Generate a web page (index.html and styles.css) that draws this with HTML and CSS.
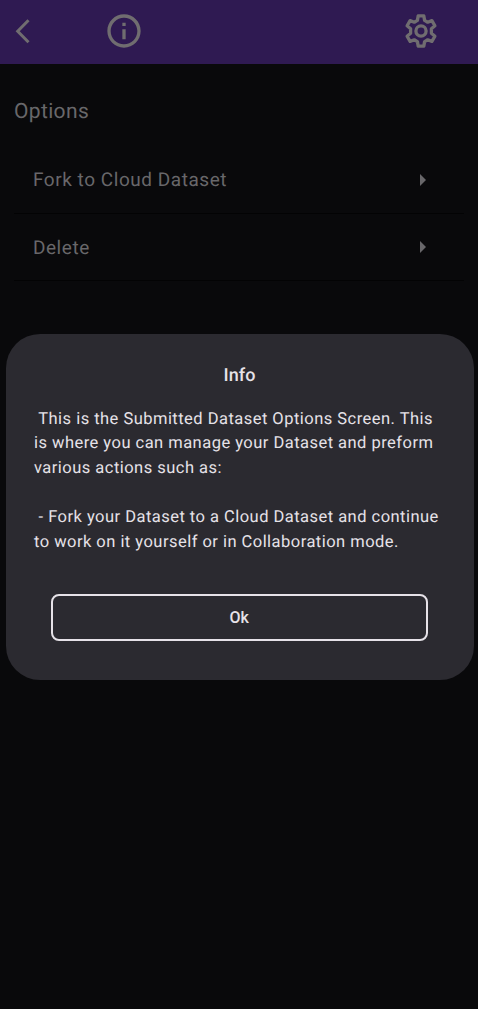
FILE: index.html
```html
<!DOCTYPE html>
<html lang="en">
<head>
<meta charset="utf-8">
<title>Options</title>
<link rel="stylesheet" href="styles.css">
</head>
<body>
<header class="bar">
  <svg class="back" viewBox="0 0 30 30"><path d="M21.500 4.300 10.700 15.300l10.800 11" fill="none" stroke="currentColor" stroke-width="3"/></svg>
  <svg class="info" viewBox="0 0 24 24"><path fill="currentColor" d="M11 7h2v2h-2zm0 4h2v6h-2zm1-9C6.480 2 2 6.480 2 12s4.480 10 10 10 10-4.480 10-10S17.520 2 12 2zm0 18c-4.410 0-8-3.590-8-8s3.590-8 8-8 8 3.590 8 8-3.590 8-8 8z"/></svg>
  <svg class="gear" viewBox="0 0 40 40" fill="none" stroke="currentColor" stroke-width="3.300"><path stroke-linejoin="round" d="M17.200 4.900h5.600l.8 4.500 3.100 1.800 4.200-1.600 3 5.200-3.500 2.900v4.600l3.500 2.900-3 5.200-4.200-1.600-3.100 1.800-.8 4.500h-5.600l-.8-4.500-3.100-1.800-4.200 1.600-3-5.200 3.500-2.900v-4.600l-3.500-2.900 3-5.200 4.200 1.600 3.100-1.800z"/><circle cx="20" cy="20" r="5.100"/></svg>
</header>
<main class="page">
  <h1 class="title">Options</h1>
  <div class="row"><span>Fork to Cloud Dataset</span><i class="arrow"></i></div>
  <div class="row"><span>Delete</span><i class="arrow"></i></div>
</main>
<div class="overlay">
  <section class="dialog">
    <h2 class="heading">Info</h2>
    <p class="text"> This is the Submitted Dataset Options Screen. This
is where you can manage your Dataset and preform
various actions such as:

 - Fork your Dataset to a Cloud Dataset and continue
to work on it yourself or in Collaboration mode.</p>
    <button class="ok">Ok</button>
  </section>
</div>
</body>
</html>
```
FILE: styles.css
```css
* { box-sizing: border-box; }
body { margin: 0; height: 1009px; overflow: hidden; background: #09090b; color: #68676a; font-family: Roboto, sans-serif; text-rendering: geometricPrecision; }
.bar { height: 64px; background: #2f1a52; color: #706d70; display: flex; align-items: center; padding: 0 37px 2px 7px; }
.back { width: 30px; height: 30px; }
.info { width: 40px; height: 40px; margin-left: 67px; }
.gear { width: 40px; height: 40px; margin-left: auto; }
.page { padding: 34px 14px 0; }
.title { margin: 0; font-size: 21px; line-height: 28px; font-weight: 400; letter-spacing: .35px; padding-bottom: 20px; }
.row { height: 67.500px; display: flex; align-items: center; justify-content: space-between; padding: 1px 38px 0 19px; border-bottom: 1px solid #030304; font-size: 19px; letter-spacing: .54px; }
.arrow { border-left: 6px solid currentColor; border-top: 6px solid transparent; border-bottom: 6px solid transparent; }
.overlay { position: absolute; inset: 334px 4.500px auto 5.500px; }
.dialog { height: 346px; border-radius: 34px; background: #2b2a30; color: #e6e2e8; padding: 29px 28.500px 0; }
.heading { margin: 0; font-size: 18px; line-height: 26px; font-weight: 500; letter-spacing: .1px; text-align: center; }
.text { margin: 18.600px 0 0; font-size: 16.500px; line-height: 24.700px; letter-spacing: .47px; white-space: pre; }
.ok { display: block; width: 377.500px; height: 47px; margin: 38.400px 0 0 16.500px; padding: 0; border: 2px solid #e6e2e8; border-radius: 8px; background: none; color: inherit; font: 500 16px Roboto, sans-serif; }
```
